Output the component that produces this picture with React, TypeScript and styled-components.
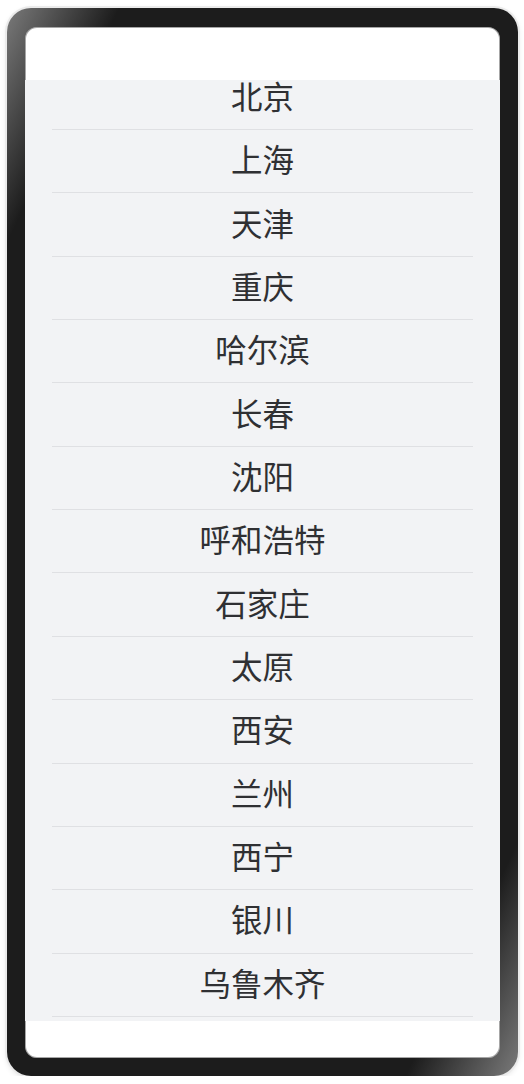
import React from 'react';
import styled, { createGlobalStyle } from 'styled-components';

const cities = [
  '北京', '上海', '天津', '重庆', '哈尔滨', '长春', '沈阳', '呼和浩特',
  '石家庄', '太原', '西安', '兰州', '西宁', '银川', '乌鲁木齐',
];

function App() {
  return (
    <>
      <Global />
      <Frame>
        <Screen>
          <Header />
          <ListArea>
            <List>
              {cities.map((c) => (
                <Row key={c}>{c}</Row>
              ))}
            </List>
          </ListArea>
          <Footer />
        </Screen>
      </Frame>
    </>
  );
}

export default App;

const Global = createGlobalStyle`
  html, body {
    margin: 0;
    padding: 0;
    background: #ffffff;
  }
  body {
    font-family: "Noto Sans CJK SC", "Noto Sans", sans-serif;
  }
`;

const Frame = styled.div`
  box-sizing: border-box;
  width: 511px;
  height: 1068px;
  margin: 8px 0 0 7px;
  padding: 19px 18px 18px;
  border-radius: 24px;
  background: linear-gradient(
    to bottom right,
    #7a7a7a 0%,
    #1c1c1c 11%,
    #1c1c1c 89%,
    #7a7a7a 100%
  );
  box-shadow: 0 0 0 2px #ebebeb, 0 2px 6px rgba(0, 0, 0, 0.12);
  display: flex;
`;

const Screen = styled.div`
  flex: 1;
  display: flex;
  flex-direction: column;
  background: #ffffff;
  border-radius: 12px;
  overflow: hidden;
  box-shadow: inset 0 0 0 1px rgba(0, 0, 0, 0.35);
`;

const Header = styled.div`
  height: 53px;
  flex-shrink: 0;
`;

const ListArea = styled.div`
  height: 941px;
  flex-shrink: 0;
  background: #f2f3f5;
  overflow: hidden;
`;

const List = styled.div`
  margin-top: -13.4px;
`;

const Row = styled.div`
  box-sizing: border-box;
  height: 63.36px;
  margin: 0 27px;
  padding-bottom: 6px;
  border-bottom: 1px solid #dfe0e3;
  display: flex;
  align-items: center;
  justify-content: center;
  font-size: 31.5px;
  color: #2f3033;
`;

const Footer = styled.div`
  flex: 1;
`;
